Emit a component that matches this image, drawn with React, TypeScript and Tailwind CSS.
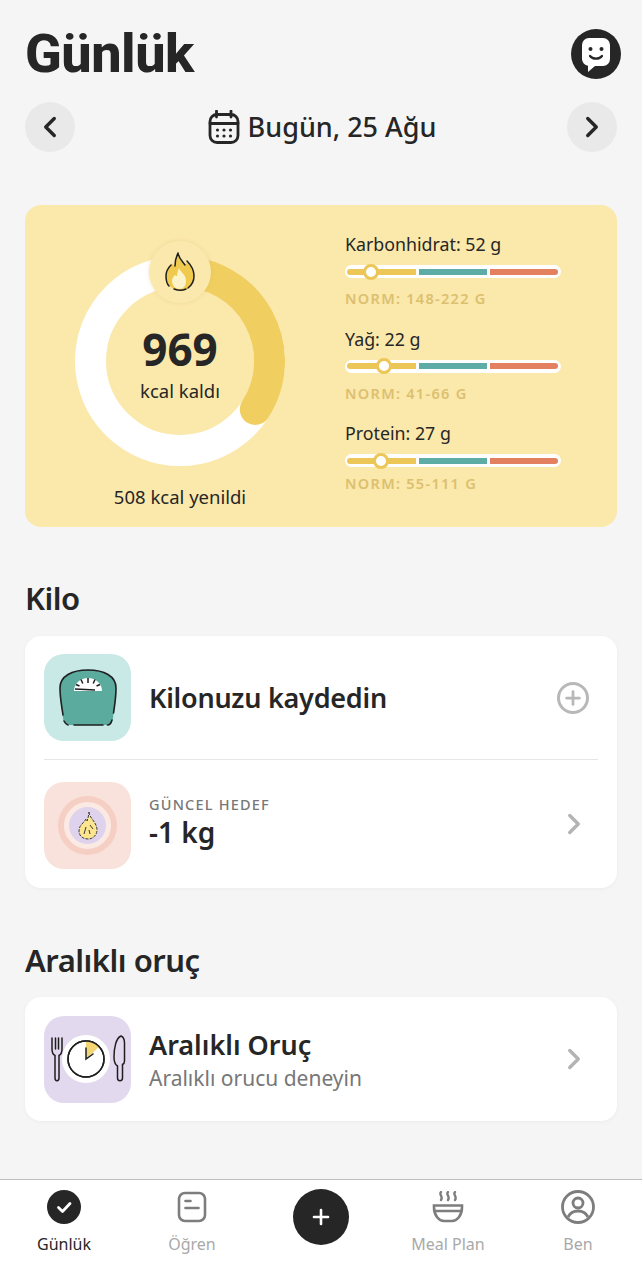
import type { ReactNode } from 'react'
import { ChevronLeft, ChevronRight, Plus } from 'lucide-react'

const macros = [
  { label: 'Karbonhidrat: 52 g', norm: 'NORM: 148-222 G', thumb: 'ml-[18px]', normGap: 'mt-[11px]' },
  { label: 'Yağ: 22 g', norm: 'NORM: 41-66 G', thumb: 'ml-[31px]', normGap: 'mt-[11px]' },
  { label: 'Protein: 27 g', norm: 'NORM: 55-111 G', thumb: 'ml-[28px]', normGap: 'mt-[7px]' },
]

function ChatLogo() {
  return (
    <svg width="50" height="50" viewBox="0 0 50 50">
      <circle cx="25" cy="25" r="25" fill="#262626" />
      <path d="M18 9h14a7 7 0 0 1 7 7v14a7 7 0 0 1-7 7h-8l-7 6v-6.200A7 7 0 0 1 11 30V16a7 7 0 0 1 7-7z" fill="#fff" />
      <circle cx="19.500" cy="20" r="2" fill="#262626" />
      <circle cx="30.500" cy="20" r="2" fill="#262626" />
      <path d="M19 27c2.500 3.500 9.500 3.500 12 0" fill="none" stroke="#262626" strokeWidth="2.200" strokeLinecap="round" />
    </svg>
  )
}

function CalendarIcon() {
  return (
    <svg width="32" height="34" viewBox="0 0 32 34" fill="none" stroke="#262626" strokeWidth="2.800">
      <rect x="2" y="4.500" width="28" height="28" rx="7" />
      <path d="M2 13.500h28M8.500 1v6M23 1v6" strokeLinecap="round" />
      <g fill="#262626" stroke="none">
        <circle cx="9.500" cy="20" r="1.600" /><circle cx="16" cy="20" r="1.600" /><circle cx="22.500" cy="20" r="1.600" />
        <circle cx="9.500" cy="26" r="1.600" /><circle cx="16" cy="26" r="1.600" /><circle cx="22.500" cy="26" r="1.600" />
      </g>
    </svg>
  )
}

function Donut() {
  return (
    <svg width="210" height="210" viewBox="0 0 210 210" className="absolute left-0 top-0">
      <circle cx="105" cy="105" r="89.500" fill="none" stroke="#fff" strokeWidth="31" />
      <path d="M105 15.500A89.500 89.500 0 0 1 180.300 153.400" fill="none" stroke="#f0cf60" strokeWidth="31" strokeLinecap="round" />
    </svg>
  )
}

function Flame() {
  return (
    <svg width="32" height="40" viewBox="0 0 32 40">
      <path d="M14 1c1 6 5 9 7 12 1-1 2-2 2-4 4 4 7 9 7 15 0 8-6 14-14 14S2 32 2 24c0-6 4-9 6-13 1 2 2 3 3 3 0-4 1-9 3-13z" fill="#f0c94f" />
      <path d="M15 16c1 4 7 6 7 13 0 5-3 8-6.500 8S8 34 8 29c0-3 2-5 3-6 1 1 1 1 2 1 0-3 1-5 2-8z" fill="#fdf3c8" />
      <path d="M14 1c1 6 5 9 7 12M23 9c4 4 7 9 7 15 0 5-2 9-6 12M7 13C4 16 2 20 2 24c0 4 1 8 3 10M10 37c4 1.500 9 1.500 12 0M11 14c0-4 1-9 3-13" fill="none" stroke="#1f1f1f" strokeWidth="1.500" strokeLinecap="round" />
    </svg>
  )
}

function MacroBar({ thumb }: { thumb: string }) {
  return (
    <div className="relative flex h-[13px] w-[216px] items-center gap-[3px] rounded-full bg-white px-[2px]">
      <div className="h-[6px] w-[69px] rounded-l-full bg-[#ecc757]" />
      <div className="h-[6px] w-[68px] bg-[#5eaca6]" />
      <div className="h-[6px] w-[68px] rounded-r-full bg-[#e2805f]" />
      <div className="absolute left-0 top-[-1.500px]">
        <div className={`h-4 w-4 rounded-full border-[3px] border-[#ecc757] bg-white ${thumb}`} />
      </div>
    </div>
  )
}

function ScaleIcon() {
  return (
    <div className="flex h-[87px] w-[87px] items-center justify-center rounded-[20px] bg-[#c8e9e6]">
      <svg width="60" height="59" viewBox="0 0 60 59">
        <path d="M2 20C2 8 14 2 30 2s28 6 28 18c0 12-2 22-3 30-.5 4-3 7-7 7H12c-4 0-6.500-3-7-7C4 42 2 32 2 20z" fill="#5cab9f" />
        <path d="M2 20C2 8 14 2 30 2s28 6 28 18c0 10-1.500 18-2.500 25M45 57H16M54 52c-.8 3-2.500 5-4.500 5M5 47C4 39 2 31 2 20M6 53c1 2 2 3.500 4 4" fill="none" stroke="#1f1f1f" strokeWidth="1.600" strokeLinecap="round" />
        <path d="M16 23a14 13 0 0 1 28 0z" fill="#fff" />
        <path d="M30 10v5M23 11.500l1.800 4M37 11.500l-1.800 4M18 16.500l3.500 1.500M42 16.500l-3.500 1.500M17 21l20 1" stroke="#1f1f1f" strokeWidth="1.500" />
      </svg>
    </div>
  )
}

function GoalIcon() {
  return (
    <div className="mt-[4px] flex h-[87px] w-[87px] items-center justify-center rounded-[20px] bg-[#f9e2db]">
      <div className="flex h-[59px] w-[59px] items-center justify-center rounded-full border-[6px] border-[#f6cfc4] bg-[#fbe9e4]">
        <div className="flex h-[37px] w-[37px] items-center justify-center rounded-full bg-[#dfd2ec]">
          <svg width="20" height="29" viewBox="0 0 20 29">
            <path d="M11 1c0 6 8 10 8 18 0 5-4 9-9 9s-9-3-9-8c0-6 5-8 7-12 1 1 1 1 1 2 1-3 2-6 2-9z" fill="#fbe58f" stroke="#3a3a3a" strokeWidth="1" strokeDasharray="3 1.200" />
            <path d="M6 23l2-7M11 19l1 4M12 14l3 4" stroke="#3a3a3a" strokeWidth="1" />
          </svg>
        </div>
      </div>
    </div>
  )
}

function FastingIcon() {
  return (
    <div className="flex h-[87px] w-[87px] items-center justify-center rounded-[20px] bg-[#e3d9ee]">
      <svg width="76" height="48" viewBox="0 0 76 48" fill="none" stroke="#1f1f1f" strokeWidth="1.500" strokeLinecap="round">
        <path d="M2 3v11c0 4 2 6 3 6.500V43c0 3.500 4 3.500 4 0V20.500c1-.5 3-2.500 3-6.500V3M5.500 3v11M8.500 3v11" fill="none" />
        <circle cx="36" cy="24" r="24" fill="#fff" stroke="none" />
        <circle cx="36" cy="24" r="18" fill="#fff" />
        <path d="M36 24V6a18 18 0 0 1 13 6z" fill="#f3d574" stroke="none" />
        <circle cx="36" cy="24" r="18" />
        <path d="M36 13v11l7-5" />
        <path d="M71 1c2.500 1 3.500 3 3.500 7v18c0 2-1 3-2 3.500V43c0 3.500-5 3.500-5 0V31c-2-1-3.500-4-3.500-9C64 13 66 3 71 1z" fill="#e3d9ee" />
      </svg>
    </div>
  )
}

function SectionTitle({ children }: { children: string }) {
  return <h2 className="text-[31px] font-semibold leading-[38px] tracking-[-0.5px] text-[#262626]">{children}</h2>
}

function NavItem({ label, active, icon, width }: { label: string; active?: boolean; icon: ReactNode; width: string }) {
  return (
    <div className={`flex flex-col items-center ${width}`}>
      <div className="flex h-[34px] items-center justify-center">{icon}</div>
      <span className={`mt-[10px] text-[16px] leading-5 ${active ? 'text-[#262626]' : 'text-[#a9a9a9]'}`}>{label}</span>
    </div>
  )
}

export default function App() {
  return (
    <div className="flex h-[1280px] w-[642px] flex-col overflow-hidden bg-[#f5f5f5] font-['Noto_Sans',sans-serif] text-[#262626]">
      <main className="flex-1 px-[25px]">
        {/* Header */}
        <div className="flex items-center justify-between pt-[29px]">
          <h1 className="font-['Roboto',sans-serif] text-[54px] font-extrabold leading-[50px] tracking-[-0.5px]">Günlük</h1>
          <div className="-mr-1">
            <ChatLogo />
          </div>
        </div>
        <div className="mt-[23px] flex items-center justify-between">
          <button className="flex h-[50px] w-[50px] items-center justify-center rounded-full bg-[#e9e9e9]">
            <ChevronLeft size={34} strokeWidth={2.400} />
          </button>
          <div className="flex items-center gap-[8px] pl-[2px]">
            <CalendarIcon />
            <span className="text-[27px] font-medium leading-9">Bugün, 25 Ağu</span>
          </div>
          <button className="flex h-[50px] w-[50px] items-center justify-center rounded-full bg-[#e9e9e9]">
            <ChevronRight size={34} strokeWidth={2.400} />
          </button>
        </div>

        {/* Calories card */}
        <section className="mt-[53px] flex h-[322px] rounded-[16px] bg-[#fbe8ab]">
          <div className="ml-[50px] flex w-[210px] flex-col pt-[51px]">
            <div className="relative h-[210px] w-[210px]">
              <Donut />
              <div className="absolute left-[74px] top-[-15px] flex h-[62px] w-[62px] items-center justify-center rounded-full bg-[#fae8ad] shadow-[0_0_4px_rgba(200,170,90,0.25)]">
                <Flame />
              </div>
              <div className="relative flex h-full flex-col items-center justify-center gap-[6px] pt-[8px]">
                <span className="text-[44px] font-bold leading-[46px]">969</span>
                <span className="text-[18.500px] leading-[26px]">kcal kaldı</span>
              </div>
            </div>
            <p className="mt-[19px] text-center text-[18.500px] leading-6">508 kcal yenildi</p>
          </div>
          <div className="ml-[60px] flex flex-col gap-[19.500px] pt-[27px]">
            {macros.map((m) => (
              <div key={m.label}>
                <p className="text-[17.800px] leading-6">{m.label}</p>
                <div className="mt-[9px]">
                  <MacroBar thumb={m.thumb} />
                </div>
                <p className={`${m.normGap} text-[14.500px] font-semibold leading-[18px] tracking-[1.300px] text-[#dcc070]`}>{m.norm}</p>
              </div>
            ))}
          </div>
        </section>

        {/* Kilo */}
        <div className="mt-[52px]">
          <SectionTitle>Kilo</SectionTitle>
        </div>
        <section className="mt-[19px] h-[252px] rounded-[16px] bg-white px-[19px] shadow-[0_1px_4px_rgba(0,0,0,0.04)]">
          <div className="flex h-[124px] items-center border-b border-[#e6e6e6]">
            <ScaleIcon />
            <span className="ml-[18px] flex-1 text-[27px] font-semibold leading-9 tracking-[-0.25px] text-[#262626]">Kilonuzu kaydedin</span>
            <div className="mr-[9px] flex h-8 w-8 items-center justify-center rounded-full border-[3px] border-[#b8b8b8]">
              <Plus size={22} strokeWidth={3} className="text-[#b8b8b8]" />
            </div>
          </div>
          <div className="flex h-[127px] items-center">
            <GoalIcon />
            <div className="ml-[18px] flex-1 pb-[4px]">
              <p className="text-[14.500px] font-medium leading-[18px] tracking-[1.200px] text-[#777]">GÜNCEL HEDEF</p>
              <p className="mt-[2px] text-[28px] font-semibold leading-[34px]">-1 kg</p>
            </div>
            <ChevronRight size={34} strokeWidth={2.400} className="mr-[7px] text-[#b4b4b4]" />
          </div>
        </section>

        {/* Aralıklı oruç */}
        <div className="mt-[53px]">
          <SectionTitle>Aralıklı oruç</SectionTitle>
        </div>
        <section className="mt-[18px] flex h-[124px] items-center rounded-[16px] bg-white px-[19px] shadow-[0_1px_4px_rgba(0,0,0,0.04)]">
          <FastingIcon />
          <div className="ml-[18px] flex-1">
            <p className="text-[27px] font-semibold leading-9">Aralıklı Oruç</p>
            <p className="mt-[1px] text-[21px] leading-[28px] text-[#777]">Aralıklı orucu deneyin</p>
          </div>
          <ChevronRight size={34} strokeWidth={2.400} className="mr-[7px] text-[#b4b4b4]" />
        </section>
      </main>

      {/* Tab bar */}
      <nav className="flex h-[101px] border-t border-[#bdbdbd] bg-white pt-[10px]">
        <NavItem
          label="Günlük"
          active
          width="w-[128px]"
          icon={
            <svg width="34" height="34" viewBox="0 0 34 34">
              <circle cx="17" cy="17" r="17" fill="#262626" />
              <path d="M11.500 17.500l4 4 7.500-8" fill="none" stroke="#fff" strokeWidth="2.800" strokeLinecap="round" strokeLinejoin="round" />
            </svg>
          }
        />
        <NavItem
          label="Öğren"
          width="w-[128px]"
          icon={
            <svg width="30" height="32" viewBox="0 0 30 32" fill="none" stroke="#7d7d7d" strokeWidth="2.600" strokeLinecap="round">
              <rect x="2" y="2" width="26" height="28" rx="6" />
              <path d="M8.500 10h5M8.500 17h13" />
            </svg>
          }
        />
        <div className="flex w-[130px] justify-center">
          <button className="-mt-px flex h-[56px] w-[56px] items-center justify-center rounded-full bg-[#262626]">
            <Plus size={24} strokeWidth={2.600} className="text-white" />
          </button>
        </div>
        <NavItem
          label="Meal Plan"
          width="w-[124px]"
          icon={
            <svg width="32" height="32" viewBox="0 0 32 32" fill="none" stroke="#7d7d7d" strokeWidth="2.600" strokeLinecap="round">
              <path d="M2 14.500h28v2c0 8-5 13.500-10 13.500h-8C7 30 2 24.500 2 16.500zM3.500 20h25" />
              <path d="M9 1c-2.500 2.500 2.500 4.500 0 8M16 1c-2.500 2.500 2.500 4.500 0 8M23 1c-2.500 2.500 2.500 4.500 0 8" strokeWidth="2.400" />
            </svg>
          }
        />
        <NavItem
          label="Ben"
          width="w-[132px] pl-[4px]"
          icon={
            <svg width="34" height="34" viewBox="0 0 34 34" fill="none" stroke="#7d7d7d" strokeWidth="2.800">
              <circle cx="17" cy="17" r="15.500" />
              <circle cx="17" cy="13" r="5" />
              <path d="M7 27c2-4 6-6 10-6s8 2 10 6" />
            </svg>
          }
        />
      </nav>
    </div>
  )
}
